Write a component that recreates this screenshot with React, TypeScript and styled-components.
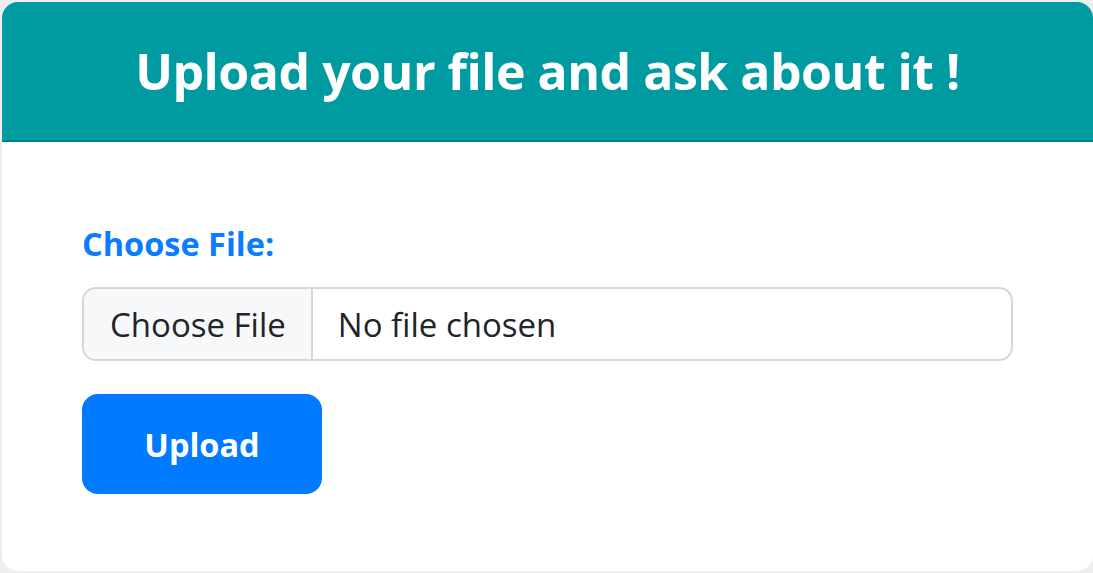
import React, { useState } from 'react'
import styled, { createGlobalStyle } from 'styled-components'

const GlobalStyle = createGlobalStyle`
  html, body {
    margin: 0;
    padding: 0;
    background: #eeeeee;
    font-family: "Open Sans", "Noto Sans", sans-serif;
  }
`

const Page = styled.div`
  padding: 2px 0 0 2px;
  height: 571px;
  box-sizing: border-box;
`

const Card = styled.section`
  background: #ffffff;
  border-radius: 16px;
  overflow: hidden;
  height: 569px;
  display: flex;
  flex-direction: column;
`

const Header = styled.header`
  background: #009ba0;
  border-bottom: 2px solid #00817f;
  height: 138px;
  display: flex;
  align-items: center;
  justify-content: center;
`

const Title = styled.h1`
  margin: 0;
  color: #ffffff;
  font-size: 50px;
  font-weight: 700;
  line-height: 1;
  letter-spacing: -0.5px;
`

const Body = styled.div`
  padding: 82px 80px 0 80px;
  display: flex;
  flex-direction: column;
  align-items: flex-start;
`

const Label = styled.label`
  color: #0a7cff;
  font-size: 32.5px;
  font-weight: 700;
  line-height: 40px;
  margin-bottom: 23px;
`

const FileBox = styled.label`
  box-sizing: border-box;
  width: 100%;
  height: 74px;
  display: flex;
  align-items: stretch;
  border: 2px solid #d3d6db;
  border-radius: 14px;
  overflow: hidden;
  cursor: pointer;
  margin-bottom: 33px;
`

const FileButton = styled.span`
  display: flex;
  align-items: center;
  padding: 0 25px 0 26px;
  background: #f7f8fa;
  border-right: 2px solid #d3d6db;
  color: #212529;
  font-size: 33px;
`

const FileName = styled.span`
  display: flex;
  align-items: center;
  padding: 0 25px;
  color: #212529;
  font-size: 33px;
`

const HiddenInput = styled.input`
  display: none;
`

const UploadButton = styled.button`
  width: 240px;
  height: 100px;
  border: none;
  border-radius: 16px;
  background: #007bff;
  color: #ffffff;
  font-family: inherit;
  font-size: 32.5px;
  font-weight: 700;
  cursor: pointer;
`

const App = () => {
  const [fileName, setFileName] = useState<string>('')

  return (
    <Page>
      <GlobalStyle />
      <Card>
        <Header>
          <Title>Upload your file and ask about it !</Title>
        </Header>
        <Body>
          <Label htmlFor="file">Choose File:</Label>
          <FileBox>
            <FileButton>Choose File</FileButton>
            <FileName>{fileName || 'No file chosen'}</FileName>
            <HiddenInput
              id="file"
              type="file"
              onChange={(e) => setFileName(e.target.files?.[0]?.name ?? '')}
            />
          </FileBox>
          <UploadButton>Upload</UploadButton>
        </Body>
      </Card>
    </Page>
  )
}

export default App
